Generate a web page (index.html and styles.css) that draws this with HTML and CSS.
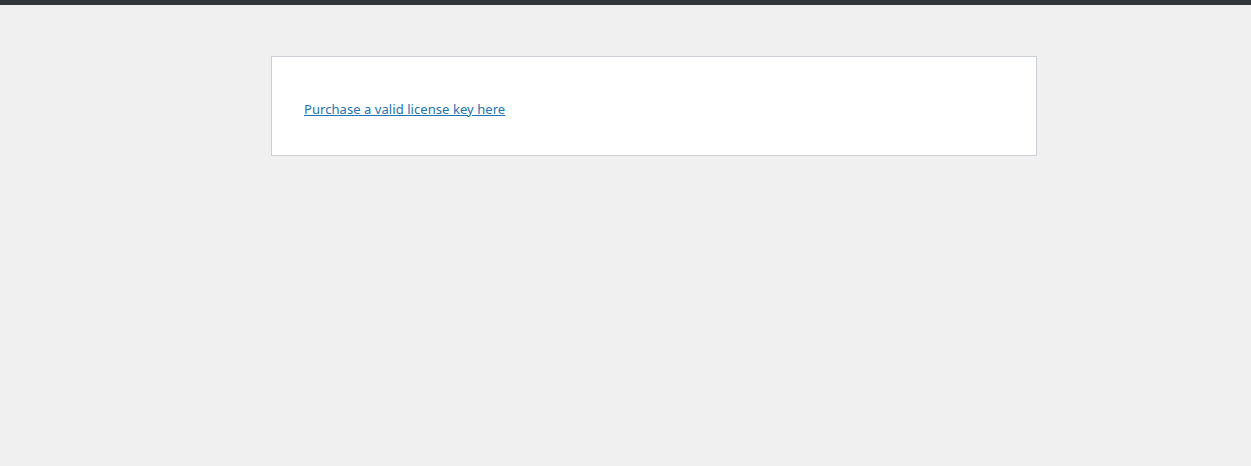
FILE: index.html
```html
<!DOCTYPE html>
<html>
<head>
<meta charset="utf-8">
<link rel="stylesheet" href="styles.css">
</head>
<body>
<div class="topbar"></div>
<main class="content">
  <div class="card">
    <p class="notice"><a href="#">Purchase a valid license key here</a></p>
  </div>
</main>
</body>
</html>
```
FILE: styles.css
```css
html, body {
  margin: 0;
  padding: 0;
  background: #f0f0f1;
  font-family: "Noto Sans", "Open Sans", sans-serif;
  font-size: 13px;
  color: #3c434a;
}
.topbar {
  height: 5px;
  background: #32373c;
}
.content {
  padding: 51px 0 0 271px;
}
.card {
  box-sizing: border-box;
  width: 766px;
  height: 100px;
  background: #fff;
  border: 1px solid #ccd0d4;
  padding: 0 32px;
  display: flex;
  align-items: center;
}
.notice {
  margin: 6px 0 0 0;
  line-height: 19px;
  letter-spacing: 0.06px;
}
.notice a {
  color: #2271b1;
  text-decoration: underline;
}
```
